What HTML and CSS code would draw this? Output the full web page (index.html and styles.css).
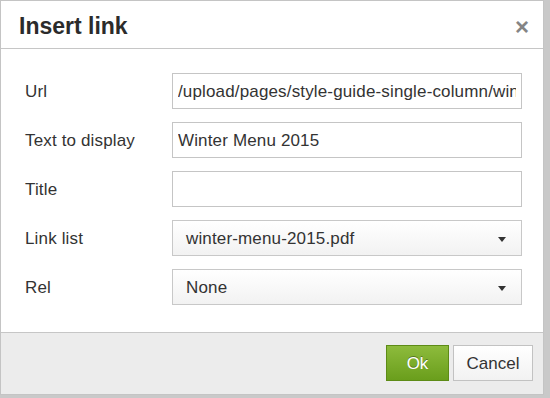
FILE: index.html
```html
<!DOCTYPE html>
<html lang="en">
<head>
  <meta charset="UTF-8" />
  <meta name="viewport" content="width=device-width, initial-scale=1.0"/>
  <title>Insert link</title>
  <link rel="stylesheet" href="styles.css">
</head>
<body>
  <div class="dialog">
    <div class="dialog-head">
      <h1>Insert link</h1>
      <button class="close" type="button">&times;</button>
    </div>

    <form class="dialog-body" id="linkForm">
      <div class="row">
        <label for="url">Url</label>
        <input type="text" id="url" value="/upload/pages/style-guide-single-column/winter-menu-2015.pdf" />
      </div>
      <div class="row">
        <label for="text">Text to display</label>
        <input type="text" id="text" value="Winter Menu 2015" />
      </div>
      <div class="row">
        <label for="title">Title</label>
        <input type="text" id="title" value="" />
      </div>
      <div class="row">
        <label>Link list</label>
        <div class="select"><span>winter-menu-2015.pdf</span><i class="caret"></i></div>
      </div>
      <div class="row">
        <label>Rel</label>
        <div class="select"><span>None</span><i class="caret"></i></div>
      </div>
    </form>

    <div class="dialog-foot">
      <button class="btn btn-ok" type="button">Ok</button>
      <button class="btn" type="button">Cancel</button>
    </div>
  </div>
</body>
</html>
```

FILE: styles.css
```css
* {
  box-sizing: border-box;
  margin: 0;
  padding: 0;
}

body {
  font-family: 'Liberation Sans', Arial, sans-serif;
  background-color: #c9c9c9;
  color: #333;
  height: 398px;
  overflow: hidden;
}

.dialog {
  width: 544px;
  height: 395px;
  background: #fff;
  border: 1px solid #c4c4c4;
  display: flex;
  flex-direction: column;
}

.dialog-head {
  height: 48px;
  border-bottom: 1px solid #c6c6c6;
  display: flex;
  align-items: center;
  justify-content: space-between;
  padding: 0 14px 0 18px;
}

.dialog-head h1 {
  font-size: 23px;
  font-weight: bold;
  color: #2b2b2b;
  padding-top: 4px;
}

.close {
  border: none;
  background: none;
  font-family: 'Liberation Sans', Arial, sans-serif;
  font-size: 24px;
  font-weight: bold;
  color: #858585;
  line-height: 1;
  padding-top: 4px;
}

.dialog-body {
  flex: 1;
  padding: 24px 21px 0 24px;
  display: flex;
  flex-direction: column;
  gap: 13px;
}

.row {
  display: flex;
  align-items: center;
  height: 36px;
}

.row label {
  width: 147px;
  font-size: 17px;
  letter-spacing: 0.15px;
  color: #333;
  padding-top: 2px;
}

.row input,
.select {
  flex: 1;
  height: 36px;
  border: 1px solid #c5c5c5;
  font-family: 'Liberation Sans', Arial, sans-serif;
  font-size: 17px;
  letter-spacing: 0.15px;
  color: #333;
}

.row input {
  padding: 2px 5px 0;
  outline: none;
  background: #fff;
}

.select {
  display: flex;
  align-items: center;
  justify-content: space-between;
  padding: 2px 13px 0;
  background: linear-gradient(#fff, #f2f2f2);
  border-color: #c8c8c8;
}

.caret {
  width: 0;
  height: 0;
  border-left: 4px solid transparent;
  border-right: 4px solid transparent;
  border-top: 5px solid #333;
  margin-right: 2px;
}

.dialog-foot {
  height: 62px;
  border-top: 1px solid #c6c6c6;
  background: #ececec;
  display: flex;
  justify-content: flex-end;
  align-items: center;
  gap: 4px;
  padding: 0 10px 1px 0;
}

.btn {
  height: 36px;
  width: 80px;
  border: 1px solid #c2c2c2;
  background: linear-gradient(#fff, #f2f2f2);
  font-family: 'Liberation Sans', Arial, sans-serif;
  font-size: 17px;
  color: #333;
  padding-top: 2px;
}

.btn-ok {
  width: 63px;
  border-color: #5d8b16;
  background: linear-gradient(#8dbb3c, #6a9e1c);
  color: #fff;
  text-shadow: 0 -1px 0 rgba(0, 0, 0, 0.35);
}
```
